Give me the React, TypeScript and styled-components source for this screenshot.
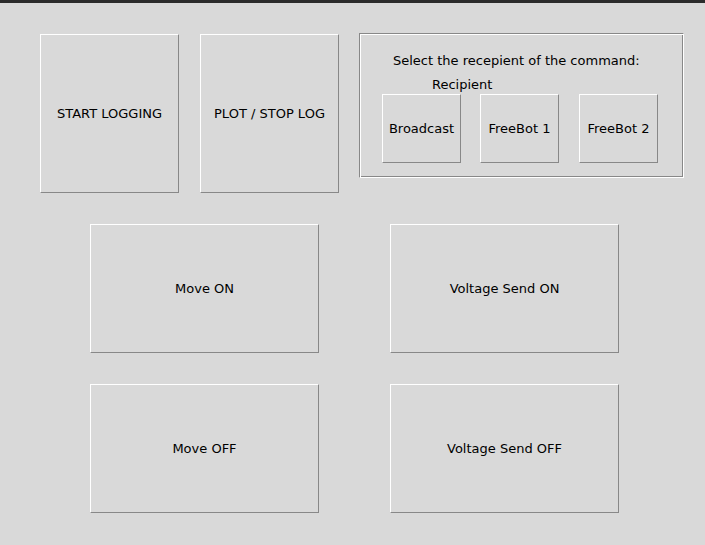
import React from "react";
import styled, { createGlobalStyle } from "styled-components";

const Global = createGlobalStyle`
  html, body { margin: 0; padding: 0; background: #d9d9d9; }
  body { font-family: "DejaVu Sans", "Liberation Sans", sans-serif; font-size: 13px; color: #000; }
`;

const Window = styled.div`
  width: 705px;
  height: 545px;
  background: #d9d9d9;
  display: flex;
  flex-direction: column;
  overflow: hidden;
`;

const TopBar = styled.div`
  height: 3px;
  background: #2b2b2b;
  flex: none;
`;

const Row = styled.div<{ $top: number; $left: number; $gap: number }>`
  display: flex;
  align-items: flex-start;
  margin-top: ${(p) => p.$top}px;
  padding-left: ${(p) => p.$left}px;
  gap: ${(p) => p.$gap}px;
`;

const TkButton = styled.button<{ $w: number; $h: number }>`
  box-sizing: border-box;
  width: ${(p) => p.$w}px;
  height: ${(p) => p.$h}px;
  margin: 0;
  padding: 0;
  background: #d9d9d9;
  border: 1px solid;
  border-color: #ffffff #888888 #888888 #ffffff;
  border-radius: 0;
  font-family: "DejaVu Sans", "Liberation Sans", sans-serif;
  font-size: 13px;
  color: #000;
  display: flex;
  align-items: center;
  justify-content: center;
  flex: none;
  cursor: default;
  outline: none;
`;

const Frame = styled.div`
  box-sizing: border-box;
  width: 325px;
  height: 145px;
  margin-top: -1px;
  margin-left: -1px;
  border: 1px solid;
  border-color: #888888 #ffffff #ffffff #888888;
  box-shadow: inset 1px 1px 0 #ffffff, inset -1px -1px 0 #888888;
  padding-top: 19px;
  display: flex;
  flex-direction: column;
`;

const Label = styled.div<{ $left: number; $top: number }>`
  padding-left: ${(p) => p.$left}px;
  margin-top: ${(p) => p.$top}px;
  line-height: 16px;
  height: 16px;
  white-space: nowrap;
`;

const RadioRow = styled.div`
  display: flex;
  gap: 19px;
  padding-left: 22px;
  margin-top: 1px;
  & > :last-child {
    margin-left: 1px;
  }
`;

export default function App() {
  return (
    <Window>
      <Global />
      <TopBar />
      <Row $top={31} $left={40} $gap={21}>
        <TkButton $w={139} $h={159}>START LOGGING</TkButton>
        <TkButton $w={139} $h={159}>PLOT / STOP LOG</TkButton>
        <Frame>
          <Label $left={33} $top={0}>Select the recepient of the command:</Label>
          <Label $left={72} $top={8}>Recipient</Label>
          <RadioRow>
            <TkButton $w={79} $h={69}>Broadcast</TkButton>
            <TkButton $w={79} $h={69}>FreeBot 1</TkButton>
            <TkButton $w={79} $h={69}>FreeBot 2</TkButton>
          </RadioRow>
        </Frame>
      </Row>
      <Row $top={31} $left={90} $gap={71}>
        <TkButton $w={229} $h={129}>Move ON</TkButton>
        <TkButton $w={229} $h={129}>Voltage Send ON</TkButton>
      </Row>
      <Row $top={31} $left={90} $gap={71}>
        <TkButton $w={229} $h={129}>Move OFF</TkButton>
        <TkButton $w={229} $h={129}>Voltage Send OFF</TkButton>
      </Row>
    </Window>
  );
}
